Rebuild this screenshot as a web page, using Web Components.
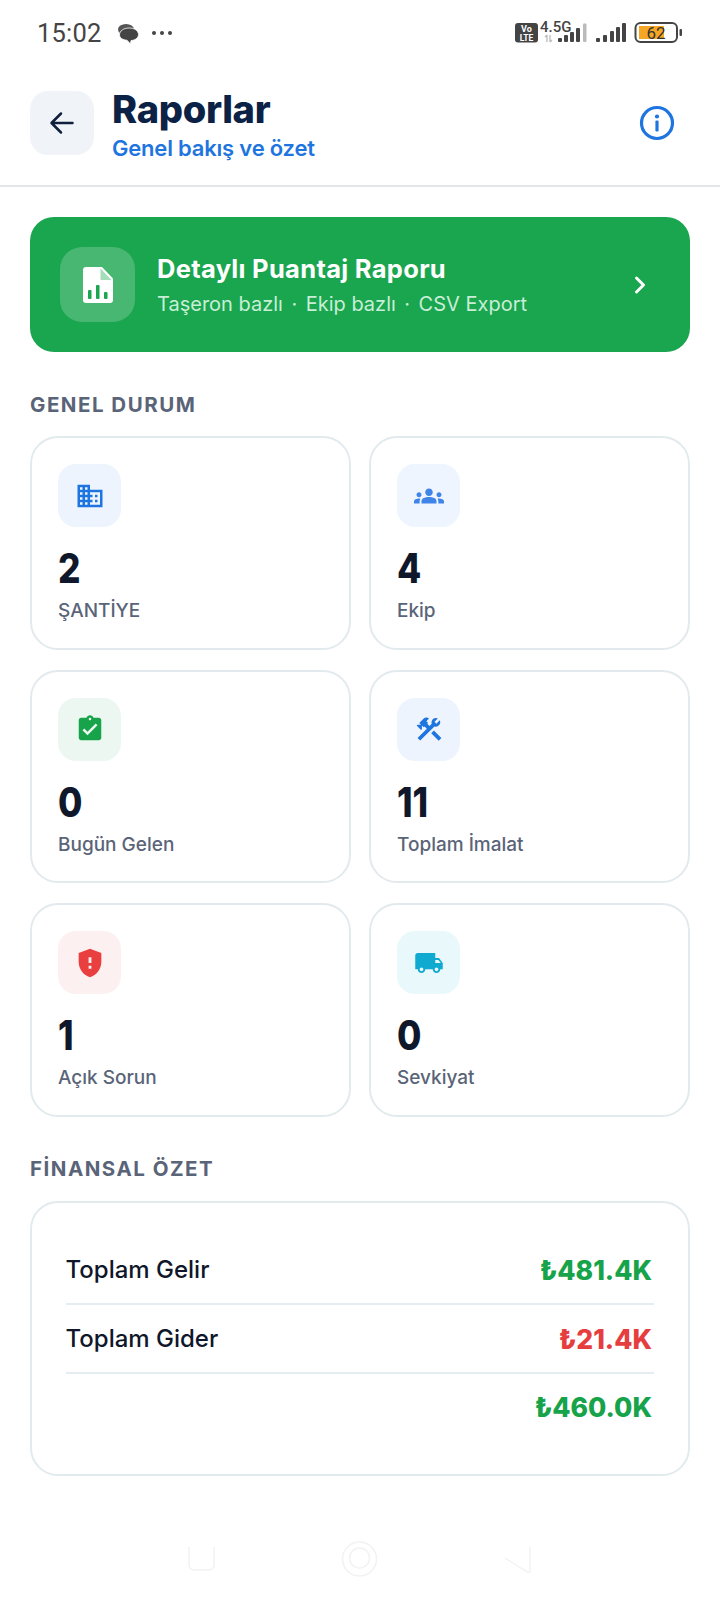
<!DOCTYPE html>
<html lang="tr"><head><meta charset="utf-8"><title>Raporlar</title>
<style>
html,body{margin:0;padding:0;background:#fff}
body{font-family:Inter,"Noto Sans",sans-serif;width:720px;height:1601px;overflow:hidden}
</style></head><body>
<app-page>
  <status-bar></status-bar>
  <page-header title="Raporlar" subtitle="Genel bakış ve özet"></page-header>
  <main-content>
    <report-banner title="Detaylı Puantaj Raporu"></report-banner>
    <section-title style="margin-top:41px">GENEL DURUM</section-title>
    <stat-grid>
      <stat-card value="2" label="ŞANTİYE" icon="business" tone="#1f75e0" bg="#edf4fe"></stat-card>
      <stat-card value="4" label="Ekip" icon="groups" tone="#3f84e8" bg="#eef5fe"></stat-card>
      <stat-card value="0" label="Bugün Gelen" icon="check" tone="#16a34a" bg="#edf7f1"></stat-card>
      <stat-card value="11" label="Toplam İmalat" icon="tools" tone="#1f75e0" bg="#eef4fd"></stat-card>
      <stat-card value="1" label="Açık Sorun" icon="shield" size="34" tone="#ea3f3f" bg="#fdf0f0"></stat-card>
      <stat-card value="0" label="Sevkiyat" icon="truck" tone="#10a9cf" bg="#e9f8fb"></stat-card>
    </stat-grid>
    <section-title style="margin-top:40px;margin-bottom:20px">FİNANSAL ÖZET</section-title>
    <finance-card>
      <finance-row label="Toplam Gelir" value="₺481.4K" tone="#16a34a"></finance-row>
      <finance-row label="Toplam Gider" value="₺21.4K" tone="#e63e3e"></finance-row>
      <finance-row label="" value="₺460.0K" tone="#16a34a" last></finance-row>
    </finance-card>
  </main-content>
  <nav-bar></nav-bar>
</app-page>
<script>
const def=(n,html)=>customElements.define(n,class extends HTMLElement{
  connectedCallback(){ if(this.shadowRoot)return; const r=this.attachShadow({mode:'open'});
    r.innerHTML=typeof html==='function'?html(this):html; }
});
const a=(e,k)=>e.getAttribute(k)||'';
const ICONS={
 business:'<path d="M12 7V3H2v18h20V7H12zM6 19H4v-2h2v2zm0-4H4v-2h2v2zm0-4H4V9h2v2zm0-4H4V5h2v2zm4 12H8v-2h2v2zm0-4H8v-2h2v2zm0-4H8V9h2v2zm0-4H8V5h2v2zm10 12h-8v-2h2v-2h-2v-2h2v-2h-2V9h8v10zm-2-8h-2v2h2v-2zm0 4h-2v2h2v-2z"/>',
 groups:'<path d="M4,13c1.1,0,2-0.9,2-2c0-1.1-0.9-2-2-2s-2,0.9-2,2C2,12.1,2.9,13,4,13z M5.13,14.1C4.76,14.04,4.39,14,4,14c-0.99,0-1.93,0.21-2.78,0.58C0.48,14.9,0,15.62,0,16.43V18l4.5,0v-1.61C4.5,15.56,4.73,14.78,5.13,14.1z M20,13c1.1,0,2-0.9,2-2c0-1.1-0.9-2-2-2s-2,0.9-2,2C18,12.1,18.9,13,20,13z M24,16.43c0-0.81-0.48-1.53-1.22-1.85C21.93,14.21,20.99,14,20,14c-0.39,0-0.76,0.04-1.13,0.1c0.4,0.68,0.63,1.46,0.63,2.29V18l4.5,0V16.43z M16.24,13.65c-1.17-0.52-2.61-0.9-4.24-0.9c-1.63,0-3.07,0.39-4.24,0.9C6.68,14.13,6,15.21,6,16.39V18h12v-1.61C18,15.21,17.32,14.13,16.24,13.65z M12,12c1.66,0,3-1.34,3-3s-1.34-3-3-3S9,7.34,9,9S10.34,12,12,12z"/>',
 check:'<path d="M19 3h-4.18C14.4 1.84 13.3 1 12 1c-1.3 0-2.4.84-2.82 2H5c-1.1 0-2 .9-2 2v14c0 1.1.9 2 2 2h14c1.1 0 2-.9 2-2V5c0-1.1-.9-2-2-2zm-7 0c.55 0 1 .45 1 1s-.45 1-1 1-1-.45-1-1 .45-1 1-1zm-2 14l-4-4 1.41-1.41L10 14.17l6.59-6.59L18 9l-8 8z"/>',
 tools:'<path d="M13.78 15.3L19.78 21.3L21.89 19.14L15.89 13.14L13.78 15.3M17.5 10.1C17.11 10.1 16.69 10.05 16.36 9.91L4.97 21.25L2.86 19.14L10.27 11.74L8.5 9.96L7.78 10.66L6.33 9.25V12.11L5.63 12.81L2.11 9.25L2.81 8.55H5.62L4.22 7.14L7.78 3.58C8.95 2.41 10.83 2.41 12 3.58L9.89 5.74L11.3 7.14L10.59 7.85L12.38 9.63L14.2 7.75C14.06 7.42 14 7 14 6.63C14 4.66 15.56 3.11 17.5 3.11C18.09 3.11 18.61 3.25 19.08 3.53L16.41 6.2L17.91 7.7L20.58 5.03C20.86 5.5 21 6 21 6.63C21 8.55 19.45 10.1 17.5 10.1Z"/>',
 shield:'<path d="M12,2L4,5v6.09c0,5.05,3.41,9.76,8,10.91c4.59-1.15,8-5.86,8-10.91V5L12,2z M13,16h-2v-2h2V16z M13,12h-2V8h2V12z"/>',
 truck:'<path d="M20 8h-3V4H3c-1.1 0-2 .9-2 2v11h2c0 1.66 1.34 3 3 3s3-1.34 3-3h6c0 1.66 1.34 3 3 3s3-1.34 3-3h2v-5l-3-4zM6 18.5c-.83 0-1.5-.67-1.5-1.5s.67-1.5 1.5-1.5 1.5.67 1.5 1.5-.67 1.5-1.5 1.5zm13.5-9l1.96 2.5H17V9.5h2.5zm-1.5 9c-.83 0-1.5-.67-1.5-1.5s.67-1.5 1.5-1.5 1.5.67 1.5 1.5-.67 1.5-1.5 1.5z"/>'
};
def('app-page',`<style>:host{display:flex;flex-direction:column;width:720px;height:1601px;background:#fff;color:#0f172a}</style><slot></slot>`);
def('status-bar',`<style>
:host{display:flex;align-items:flex-start;height:60px;box-sizing:border-box;padding:0 34px 0 37px;color:#444}
.time{font:400 25.500px/30px Roboto,sans-serif;margin-top:18px;letter-spacing:.2px}
.chat{margin:22px 0 0 15px}
.dots{margin:30px 0 0 12px}
.right{margin:19px 0 0 auto;display:block}
text{font-family:Roboto,sans-serif}
</style>
<span class="time">15:02</span>
<svg class="chat" width="22" height="22" viewBox="0 0 22 22"><ellipse cx="9" cy="7.500" rx="8" ry="5.500" fill="#555"/><path d="M2.500 13c0-4 4-7 9.500-7s9.500 2.700 9.500 6.500-4 6-7.500 6l-.5 3.500-3.500-3.800C6 18 2.500 16 2.500 13z" fill="#444" stroke="#fff" stroke-width=".8"/></svg>
<svg class="dots" width="22" height="6" viewBox="0 0 22 6" fill="#444"><circle cx="3" cy="3" r="2"/><circle cx="11" cy="3" r="2"/><circle cx="19" cy="3" r="2"/></svg>
<svg class="right" width="172" height="28" viewBox="515 19 172 28">
 <rect x="516" y="23" width="23" height="19.500" rx="3" fill="#444"/>
 <text x="527.500" y="31.500" font-size="9" font-weight="700" fill="#fff" text-anchor="middle">Vo</text>
 <text x="527.500" y="40.500" font-size="8.500" font-weight="700" fill="#fff" text-anchor="middle">LTE</text>
 <text x="541" y="31.500" font-size="15" font-weight="500" fill="#444">4.5G</text>
 <path d="M548 35v7M551 35v7M546 37l2-2M553 40l-2 2" stroke="#bbb" stroke-width="1.300" fill="none"/>
 <g fill="#444"><rect x="559" y="38" width="4" height="4" rx="1"/><rect x="565" y="35" width="4" height="7" rx="1"/><rect x="571" y="32" width="4" height="10" rx="1"/><rect x="577" y="28" width="4" height="14" rx="1"/><rect x="584" y="23.500" width="3.500" height="18.500" rx="1" fill="#bbb"/></g>
 <g fill="#444"><rect x="597" y="38" width="4" height="4" rx="1"/><rect x="604" y="35" width="4" height="7" rx="1"/><rect x="611" y="31" width="4" height="11" rx="1"/><rect x="617" y="27" width="4" height="15" rx="1"/><rect x="623" y="23" width="4" height="19" rx="1"/></g>
 <rect x="636.500" y="23" width="41.500" height="19" rx="5" fill="none" stroke="#444" stroke-width="2"/>
 <path d="M640 26h25v13h-25z" fill="#f5a623"/>
 <text x="657" y="39" font-size="17" fill="#333" text-anchor="middle">62</text>
 <rect x="680.500" y="29" width="2.500" height="7" rx="1" fill="#444"/>
</svg>`);
def('page-header',e=>`<style>
:host{display:flex;align-items:center;box-sizing:border-box;height:127px;padding:0 44.500px 0 30px;border-bottom:2.500px solid #e2e6ea}
.back{width:64px;height:64px;border-radius:18px;background:#f0f4f9;display:flex;align-items:center;justify-content:center;flex:none}
.txt{margin-left:18px;padding-top:4px;display:flex;flex-direction:column}
.t{font:800 38px/42px Inter,sans-serif;color:#0b2145;letter-spacing:-.3px}
.s{font:600 22px/27px Inter,sans-serif;color:#1f75e0;margin-top:5px;letter-spacing:-.2px}
.info{margin-left:auto;display:block}
</style>
<div class="back"><svg width="26" height="26" viewBox="0 0 26 26" fill="none" stroke="#0f1f3d" stroke-width="2.500" stroke-linecap="round" stroke-linejoin="round"><path d="M23.500 13H2.500M12 3.500L2.500 13l9.500 9.500"/></svg></div>
<div class="txt"><span class="t">${a(e,'title')}</span><span class="s">${a(e,'subtitle')}</span></div>
<svg class="info" width="38" height="38" viewBox="0 0 38 38"><circle cx="19" cy="19" r="15.500" fill="none" stroke="#1f75e0" stroke-width="3.200"/><circle cx="19" cy="12.500" r="2.100" fill="#1f75e0"/><rect x="17.400" y="16.500" width="3.200" height="11" rx="1" fill="#1f75e0"/></svg>`);
def('main-content',`<style>:host{display:flex;flex-direction:column;padding:30px 30px 0}</style><slot></slot>`);
def('report-banner',e=>`<style>
:host{display:flex;align-items:center;height:135px;box-sizing:border-box;padding:0 30px;border-radius:24px;background:#1aa54f;color:#fff}
.ic{width:75px;height:75px;border-radius:22px;background:rgba(255,255,255,.2);display:flex;align-items:center;justify-content:center;flex:none}
.txt{margin-left:22px;display:flex;flex-direction:column;flex:1}
.t{font:700 25.500px/32px Inter,sans-serif;letter-spacing:.3px}
.s{font:400 20px/26px Inter,sans-serif;color:#c9eed7;margin-top:6px}
.s i{font-style:normal;margin:0 8.500px}
</style>
<div class="ic"><svg width="30" height="36" viewBox="0 0 30 36"><path d="M3 0h16l11 11.500V33a3 3 0 0 1-3 3H3a3 3 0 0 1-3-3V3a3 3 0 0 1 3-3z" fill="#fff"/><path d="M17.500 1.500L28.500 13H17.500z" fill="#a5dcb9"/><g fill="#1aa54f"><rect x="5" y="23" width="3.500" height="9" rx="1"/><rect x="13" y="18" width="3.500" height="14" rx="1"/><rect x="21" y="25" width="3.500" height="7" rx="1"/></g></svg></div>
<div class="txt"><span class="t">${a(e,'title')}</span><span class="s">Taşeron bazlı<i>·</i>Ekip bazlı<i>·</i>CSV Export</span></div>
<svg width="14" height="20" viewBox="0 0 14 20" fill="none" stroke="#fff" stroke-width="3" stroke-linecap="round" stroke-linejoin="round" style="margin-right:13px"><path d="M3.500 3l7 7-7 7"/></svg>`);
def('section-title',`<style>:host{display:block;font:700 20.500px/24px Inter,sans-serif;letter-spacing:1.500px;color:#5a6478;margin-bottom:19px}</style><slot></slot>`);
def('stat-grid',`<style>:host{display:grid;grid-template-columns:321px 321px;column-gap:18px;row-gap:20px}</style><slot></slot>`);
def('stat-card',e=>{const s=a(e,'size')||30;return `<style>
:host{display:flex;flex-direction:column;box-sizing:border-box;height:213.500px;padding:26px 26px 0 26px;border:2px solid #e3eaee;border-radius:28px;background:#fff}
.ic{width:63px;height:63px;border-radius:18px;display:flex;align-items:center;justify-content:center;background:${a(e,'bg')};color:${a(e,'tone')}}
.v{font:800 41px/46px Inter,sans-serif;color:#0f172a;margin-top:18px;transform:scaleX(.86);transform-origin:left center}
.l{font:500 19px/26px Inter,sans-serif;color:#5a6478;margin-top:7px}
</style>
<div class="ic"><svg width="${s}" height="${s}" viewBox="0 0 24 24" fill="currentColor">${ICONS[a(e,'icon')]}</svg></div>
<div class="v">${a(e,'value')}</div><div class="l">${a(e,'label')}</div>`});
def('finance-card',`<style>:host{display:flex;flex-direction:column;box-sizing:border-box;height:275px;padding:33px 34px 0 33.500px;border:2px solid #e3eaee;border-radius:28px;background:#fff}</style><slot></slot>`);
def('finance-row',e=>`<style>
:host{display:flex;align-items:center;justify-content:space-between;height:69px;box-sizing:border-box;${e.hasAttribute('last')?'padding-bottom:2px;':'padding-top:1px;border-bottom:2px solid #e6edf1;'}}
.l{font:500 24px/30px Inter,sans-serif;color:#0f172a}
.v{font:800 26.500px/34px Inter,sans-serif;color:${a(e,'tone')};margin-right:2px}
</style><span class="l">${a(e,'label')}</span><span class="v">${a(e,'value')}</span>`);
def('nav-bar',`<style>:host{display:block;margin-top:auto;height:71px}
svg{display:block}</style>
<svg width="720" height="71" viewBox="0 1530 720 71" fill="none" stroke="#f2f2f2" stroke-width="1.500">
<path d="M189 1547v18a5 5 0 0 0 5 5h15a5 5 0 0 0 5-5v-18"/>
<circle cx="359.500" cy="1559" r="17"/><circle cx="359.500" cy="1558" r="10"/>
<path d="M505 1558l24 15M530 1547v26" stroke="#f4f4f4"/></svg>`);
</script>
</body></html>
